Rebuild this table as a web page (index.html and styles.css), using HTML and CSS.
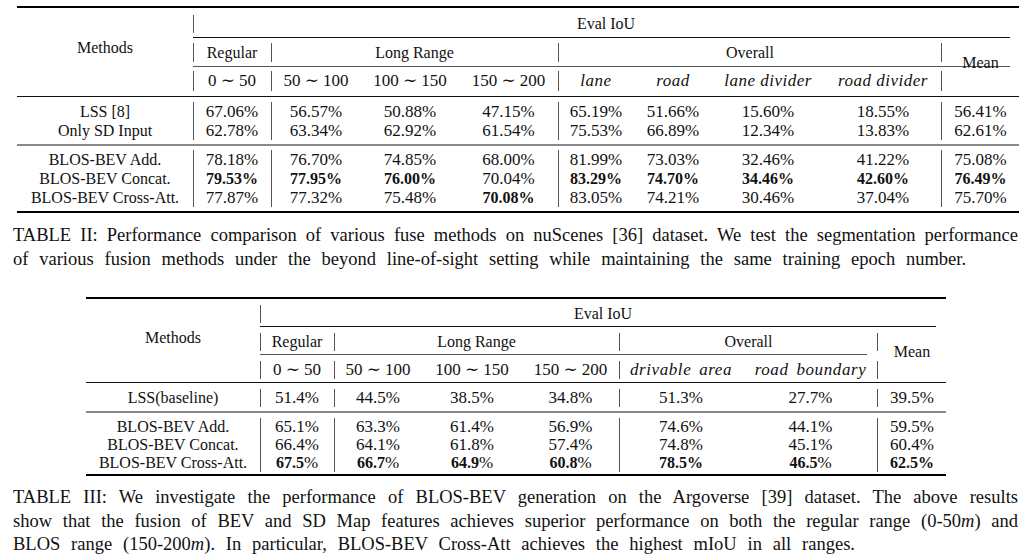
FILE: index.html
```html
<!DOCTYPE html>
<html>
<head>
<meta charset="utf-8">
<link rel="stylesheet" href="styles.css">
</head>
<body>
<div class="page">
<table class="tbl t2">
  <colgroup><col><col><col><col><col><col><col><col><col><col><col></colgroup>
  <tr class="rule"><td colspan="11" class="toprule"><div class="line"></div></td></tr>
  <tr class="hr1">
    <td rowspan="5" class="hd methods">Methods</td>
    <td colspan="10" class="hd vl">Eval IoU</td>
  </tr>
  <tr class="rule"><td colspan="10" class="cmid1"><div class="line"></div></td></tr>
  <tr class="hr2">
    <td class="hd vl">Regular</td>
    <td colspan="3" class="hd vl">Long Range</td>
    <td colspan="4" class="hd vl vr">Overall</td>
    <td rowspan="3" class="hd mean">Mean</td>
  </tr>
  <tr class="rule"><td colspan="9" class="cmid2"><div class="line"></div></td></tr>
  <tr class="hr3">
    <td class="vl">0 ∼ 50</td>
    <td class="vl">50 ∼ 100</td>
    <td>100 ∼ 150</td>
    <td>150 ∼ 200</td>
    <td class="vl it">lane</td>
    <td class="it">road</td>
    <td class="it">lane divider</td>
    <td class="it vr">road divider</td>
  </tr>
  <tr class="rule"><td colspan="11" class="midrule"><div class="line"></div></td></tr>
  <tr class="row">
    <td class="lbl">LSS [8]</td>
    <td class="vl">67.06%</td><td class="vl">56.57%</td><td>50.88%</td><td>47.15%</td>
    <td class="vl">65.19%</td><td>51.66%</td><td>15.60%</td><td class="vr">18.55%</td>
    <td>56.41%</td>
  </tr>
  <tr class="row">
    <td class="lbl">Only SD Input</td>
    <td class="vl">62.78%</td><td class="vl">63.34%</td><td>62.92%</td><td>61.54%</td>
    <td class="vl">75.53%</td><td>66.89%</td><td>12.34%</td><td class="vr">13.83%</td>
    <td>62.61%</td>
  </tr>
  <tr class="rule"><td colspan="11" class="grayrule"><div class="line"></div></td></tr>
  <tr class="row">
    <td class="lbl">BLOS-BEV Add.</td>
    <td class="vl">78.18%</td><td class="vl">76.70%</td><td>74.85%</td><td>68.00%</td>
    <td class="vl">81.99%</td><td>73.03%</td><td>32.46%</td><td class="vr">41.22%</td>
    <td>75.08%</td>
  </tr>
  <tr class="row">
    <td class="lbl">BLOS-BEV Concat.</td>
    <td class="vl"><b>79.53%</b></td><td class="vl"><b>77.95%</b></td><td><b>76.00%</b></td><td>70.04%</td>
    <td class="vl"><b>83.29%</b></td><td><b>74.70%</b></td><td><b>34.46%</b></td><td class="vr"><b>42.60%</b></td>
    <td><b>76.49%</b></td>
  </tr>
  <tr class="row">
    <td class="lbl">BLOS-BEV Cross-Att.</td>
    <td class="vl">77.87%</td><td class="vl">77.32%</td><td>75.48%</td><td><b>70.08%</b></td>
    <td class="vl">83.05%</td><td>74.21%</td><td>30.46%</td><td class="vr">37.04%</td>
    <td>75.70%</td>
  </tr>
  <tr class="rule"><td colspan="11" class="bottomrule"><div class="line"></div></td></tr>
</table>

<p class="caption cap2">
  <span class="ln just">TABLE II: Performance comparison of various fuse methods on nuScenes [36] dataset. We test the segmentation performance</span>
  <span class="ln rag">of various fusion methods under the beyond line-of-sight setting while maintaining the same training epoch number.</span>
</p>

<table class="tbl t3">
  <colgroup><col><col><col><col><col><col><col><col></colgroup>
  <tr class="rule"><td colspan="8" class="toprule"><div class="line"></div></td></tr>
  <tr class="hr1">
    <td rowspan="5" class="hd methods">Methods</td>
    <td colspan="7" class="hd vl">Eval IoU</td>
  </tr>
  <tr class="rule"><td colspan="7" class="cmid1"><div class="line"></div></td></tr>
  <tr class="hr2">
    <td class="hd vl">Regular</td>
    <td colspan="3" class="hd vl">Long Range</td>
    <td colspan="2" class="hd vl vr">Overall</td>
    <td rowspan="3" class="hd mean">Mean</td>
  </tr>
  <tr class="rule"><td colspan="6" class="cmid2"><div class="line"></div></td></tr>
  <tr class="hr3">
    <td class="vl">0 ∼ 50</td>
    <td class="vl">50 ∼ 100</td>
    <td>100 ∼ 150</td>
    <td>150 ∼ 200</td>
    <td class="vl it wide">drivable area</td>
    <td class="it wide vr">road boundary</td>
  </tr>
  <tr class="rule"><td colspan="8" class="midrule"><div class="line"></div></td></tr>
  <tr class="row">
    <td class="lbl">LSS(baseline)</td>
    <td class="vl">51.4%</td><td class="vl">44.5%</td><td>38.5%</td><td>34.8%</td>
    <td class="vl">51.3%</td><td class="vr">27.7%</td>
    <td>39.5%</td>
  </tr>
  <tr class="rule"><td colspan="8" class="grayrule"><div class="line"></div></td></tr>
  <tr class="row">
    <td class="lbl">BLOS-BEV Add.</td>
    <td class="vl">65.1%</td><td class="vl">63.3%</td><td>61.4%</td><td>56.9%</td>
    <td class="vl">74.6%</td><td class="vr">44.1%</td>
    <td>59.5%</td>
  </tr>
  <tr class="row">
    <td class="lbl">BLOS-BEV Concat.</td>
    <td class="vl">66.4%</td><td class="vl">64.1%</td><td>61.8%</td><td>57.4%</td>
    <td class="vl">74.8%</td><td class="vr">45.1%</td>
    <td>60.4%</td>
  </tr>
  <tr class="row">
    <td class="lbl">BLOS-BEV Cross-Att.</td>
    <td class="vl"><b>67.5</b>%</td><td class="vl"><b>66.7</b>%</td><td><b>64.9</b>%</td><td><b>60.8</b>%</td>
    <td class="vl"><b>78.5%</b></td><td class="vr"><b>46.5</b>%</td>
    <td><b>62.5%</b></td>
  </tr>
  <tr class="rule"><td colspan="8" class="bottomrule"><div class="line"></div></td></tr>
</table>

<p class="caption cap3">
  <span class="ln just">TABLE III: We investigate the performance of BLOS-BEV generation on the Argoverse [39] dataset. The above results</span>
  <span class="ln just">show that the fusion of BEV and SD Map features achieves superior performance on both the regular range (0-50<i>m</i>) and</span>
  <span class="ln rag">BLOS range (150-200<i>m</i>). In particular, BLOS-BEV Cross-Att achieves the highest mIoU in all ranges.</span>
</p>
</div>
</body>
</html>
```

FILE: styles.css
```css
html, body {
  margin: 0;
  padding: 0;
  background: #ffffff;
}

body {
  color: #111111;
  font-family: "Liberation Serif", "DejaVu Serif", serif;
}

.page {
  width: 1031px;
  height: 560px;
  overflow: hidden;
}

/* ---------- tables ---------- */
.tbl {
  border-collapse: separate;
  border-spacing: 0;
  table-layout: fixed;
}

.tbl td {
  padding: 0;
  text-align: center;
  vertical-align: middle;
  font-size: 17px;
  line-height: 16px;
  white-space: nowrap;
}

.tbl td.hd,
.tbl td.lbl {
  font-size: 16px;
}

.tbl b {
  font-size: 16px;
  font-weight: bold;
}

.tbl td.it {
  font-style: italic;
  letter-spacing: 0.5px;
}

.tbl td.it.wide {
  letter-spacing: 0.6px;
  word-spacing: 3px;
}

.vl {
  box-shadow: inset 1px 0 0 #555555;
}

.vr {
  box-shadow: inset -1px 0 0 #555555;
}

.vl.vr {
  box-shadow: inset 1px 0 0 #555555, inset -1px 0 0 #555555;
}

.tbl .rule td {
  font-size: 0;
  line-height: 0;
  vertical-align: top;
}

.line {
  height: 1px;
  background: #111111;
}

.toprule .line,
.bottomrule .line {
  height: 2px;
  background: #000000;
}

.cmid2 .line {
  background: #555555;
}

.grayrule .line {
  height: 2px;
  background: #8a8a8a;
}

/* Table II */
.t2 {
  width: 1002px;
  margin: 6px 0 0 17px;
}

.t2 col:nth-child(1) { width: 176px; }
.t2 col:nth-child(2) { width: 78px; }
.t2 col:nth-child(3) { width: 90px; }
.t2 col:nth-child(4) { width: 98px; }
.t2 col:nth-child(5) { width: 99px; }
.t2 col:nth-child(6) { width: 76px; }
.t2 col:nth-child(7) { width: 78px; }
.t2 col:nth-child(8) { width: 112px; }
.t2 col:nth-child(9) { width: 118px; }
.t2 col:nth-child(10) { width: 77px; }

.t2 .toprule { padding: 0 0 7px; }
.t2 .cmid1 { padding: 4px 0 5px; }
.t2 .cmid1 .line { margin-right: 9px; }
.t2 .cmid2 { padding: 4px 0 4px; }
.t2 .cmid2 .line { margin-right: 9px; }
.t2 .midrule { padding: 5px 0 5px; }
.t2 .grayrule { padding: 4px 0 4px; }
.t2 .bottomrule { padding: 4px 0 0; }

.t2 tr.hr1 { height: 18px; }
.t2 tr.hr2 { height: 19px; }
.t2 tr.hr3 { height: 20px; }
.t2 tr.row { height: 19px; }

.t2 td.methods { padding-bottom: 10px; }
.t2 td.mean { padding-bottom: 8px; }

/* Table III */
.t3 {
  width: 860px;
  margin: 26px 0 0 86px;
}

.t3 col:nth-child(1) { width: 174px; }
.t3 col:nth-child(2) { width: 74px; }
.t3 col:nth-child(3) { width: 88px; }
.t3 col:nth-child(4) { width: 100px; }
.t3 col:nth-child(5) { width: 97px; }
.t3 col:nth-child(6) { width: 124px; }
.t3 col:nth-child(7) { width: 135px; }
.t3 col:nth-child(8) { width: 68px; }

.t3 .toprule { padding: 0 0 6px; }
.t3 .cmid1 { padding: 3px 0 6px; }
.t3 .cmid1 .line { margin-right: 10px; }
.t3 .cmid2 { padding: 3px 0 6px; }
.t3 .cmid2 .line { margin-right: 11px; }
.t3 .midrule { padding: 3px 0 6px; }
.t3 .grayrule { padding: 4px 0 5px; }
.t3 .bottomrule { padding: 2px 0 0; }

.t3 tr.hr1,
.t3 tr.hr2,
.t3 tr.hr3,
.t3 tr.row { height: 18px; }

.t3 td.methods { padding-bottom: 8px; }
.t3 td.mean { padding-bottom: 8px; }

/* ---------- captions ---------- */
.caption {
  margin: 0 0 0 13px;
  width: 1005px;
  font-size: 18.5px;
  line-height: 23.5px;
}

.cap2 { margin-top: 11px; }
.cap3 { margin-top: 10px; }

.ln {
  display: block;
}

.ln.just {
  text-align: justify;
  text-align-last: justify;
}

.ln.rag {
  text-align: left;
  word-spacing: 6.2px;
}
```
